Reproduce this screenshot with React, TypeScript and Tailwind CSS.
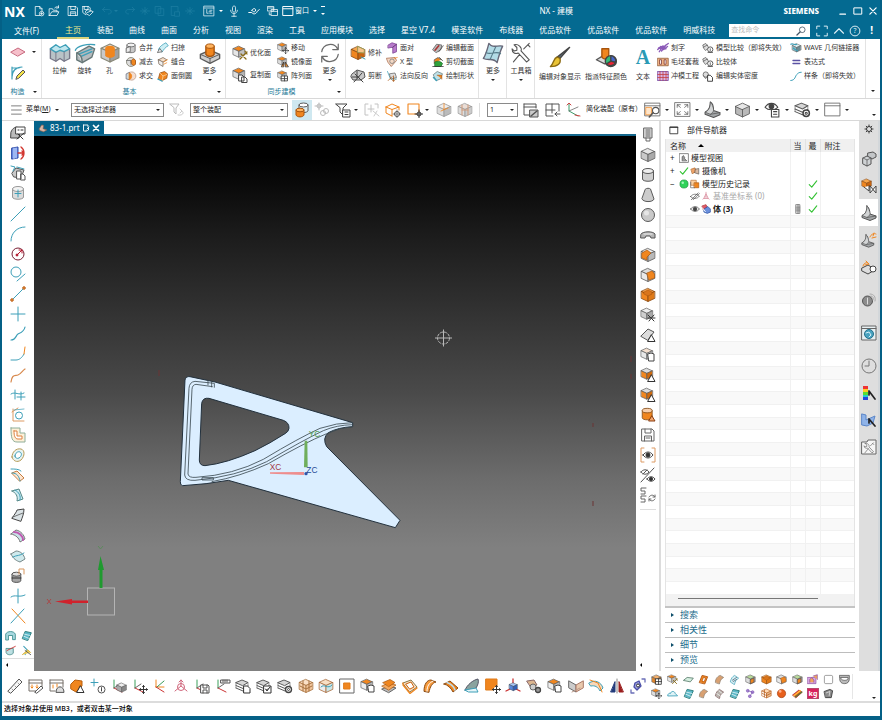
import React from "react";
import type { ReactNode } from "react";

const G = "#5a5a5a";
const L = "#d6d6d6";
const O = "#f0861f";
const T = "#3d9fb8";
const N = "none";

const p = (d: string, s: string = G, f: string = N, w: number = 1) => (
  <path d={d} stroke={s} fill={f} strokeWidth={w} strokeLinejoin="round" strokeLinecap="round" />
);
const c = (cx: number, cy: number, r: number, s: string = G, f: string = N, w: number = 1) => (
  <circle cx={cx} cy={cy} r={r} stroke={s} fill={f} strokeWidth={w} />
);
const box = (t: string, l: string, r: string, s: string = G) => (
  <>
    {p("M8 1.5 14.5 4.5 8 7.5 1.5 4.5Z", s, t, 0.8)}
    {p("M1.5 4.5 8 7.5V14.5L1.5 11.5Z", s, l, 0.8)}
    {p("M14.5 4.5 8 7.5V14.5L14.5 11.5Z", s, r, 0.8)}
  </>
);
const small = (n: ReactNode, x = 0, y = 0, k = 0.75) => <g transform={`translate(${x} ${y}) scale(${k})`}>{n}</g>;
const grayBox = box("#eee", "#cfcfcf", "#a9a9a9");
const orangeBox = box("#f9a64b", O, "#c96510", "#8a4a12");
const mixBox = box(O, "#ddd", "#b5b5b5");
const sheet = (f: string, s: string = G) => p("M2 11C3 6 5 4 8 2L14 6C11 8 9 10 8 15Z", s, f);
const layers = (
  <>
    {p("M1 10 8 13 13 10.500M1 7.500 8 10.500 13 8", G)}
    {p("M1 4.500 7 2 13 4.500 8 7.500Z", G, L)}
    {p("M1 4.500V10M13 4.500V8", G, N, 0.6)}
  </>
);
const page = p("M9 8H12.500L15 10.500V15H9Z", "#333", "#fff");
const tri = p("M11.500 8 15 14.500H8Z", "#333", "#fff");
const gearlet = <>{c(11.500, 11.500, 3, "#444", "#fff", 1.4)}{c(11.500, 11.500, 1, "#444")}</>;
const crossMove = p("M11.500 7.500V15.500M7.500 11.500H15.500M10.500 8.500 11.500 7.500 12.500 8.500M10.500 14.500 11.500 15.500 12.500 14.500M8.500 10.500 7.500 11.500 8.500 12.500M14.500 10.500 15.500 11.500 14.500 12.500", "#333");
const axes = <>{p("M3 2V10", "#3aa05a")}{p("M3 10 11 14", "#c33")}{p("M3 10 9 6", "#666")}</>;
const cyl = (t: string, b: string, s: string = G) => (
  <>
    {p("M2.500 4V12C2.500 15 13.500 15 13.500 12V4", s, b)}
    <ellipse cx="8" cy="4" rx="5.500" ry="2.500" fill={t} stroke={s} />
  </>
);
const wrench = p("M3 2 5 4 5 6 3 6.500 1.500 5C1.500 8 4 9 6 8L12 14.500 14 13 8 6.500C9 4 6 1 3 2ZM14 1 10 5M7 9 2.500 14.500M13 2 14.500 3.500", "#555", N, 0.8);
const cad = <>{p("M6 1C8 2 9 6 9 9L15 11V13L9 15.500 1 12.500V10.500C5 9 6 5 6 1Z", "#555", "#a3a6a8")}{p("M6 1C6 5 5 9 1 10.500L6 12.500C8 11 9 10 9 9M6 12.500 15 11", "#555", "#d3d5d6", 0.7)}</>;

const icons: Record<string, ReactNode> = {
  newDoc: <>{p("M9 14H3V2H9L12 5V8M9 2V5H12", "#fff")}{c(11.500, 11.500, 3, "#fff")}{p("M11.500 10V13M10 11.500H13", "#fff")}</>,
  open: <>{p("M1.500 14V5H6L7 7H12V9M1.500 14H12L14.500 9H5L2 14M9 4C10 2 12 2 14 3M14 1V4H11", "#fff")}</>,
  save: <>{p("M2 2H12L14 4V14H2ZM5 2V6H11V2M4.500 14V9H11.500V14M6 11H10", "#fff")}</>,
  saveEdit: <>{p("M1 2H9L11 4V6M1 2V10L5 13M3 2V6H8V2M5 8 8 6 15 9 10 14 6 12Z M7 10 12 8", "#fff")}</>,
  undo: p("M2 6H10C15 6 15 12 10 12M5 3 2 6 5 9", "#1c7ea2"),
  redo: p("M14 6H6C1 6 1 12 6 12M11 3 14 6 11 9", "#1c7ea2"),
  dimA: p("M2 8H14M8 3V13M4 5 11 11M4 11 11 5", "#1c7ea2"),
  dimB: p("M2 2H9V11H2ZM6 5H13V14H6Z", "#1c7ea2"),
  dimC: p("M3 2H12V8M3 2V14H7M8 9H14V15H8Z", "#1c7ea2"),
  cmd: p("M1.500 1.500H14.500V14.500H1.500ZM1.500 4H14.500M5 6V11H7M9 7H12M9 11H12M8 9H11", "#e8f4f8"),
  mic: p("M6 3C6 .8 10 .8 10 3V8C10 10 6 10 6 8ZM3.500 7C3.500 13 12.500 13 12.500 7M8 12V15M5 15H11", "#fff"),
  touch: p("M1 10H5C7 13 11 12 12 9L15 6M5 7C8 3 11 5 10 8C9 10 6 9 5 7", "#fff", N, 1.3),
  windows: p("M1 2H9V8H1ZM1 4H9M6 6H14V14H6ZM6 8.500H14M3 10V13H5", "#fff"),
  window: p("M1.500 2H14.500V14H1.500ZM1.500 5H14.500", "#fff", N, 1.3),
  full: p("M1 5V1.500H5M11 1.500H15V5M15 11V14.500H11M5 14.500H1V11", "#dff0f6", N, 1.3),
  up: p("M2 11 8 5 14 11", "#dff0f6", N, 1.5),
  help: <>{c(8, 8, 6.500, "#dff0f6", N, 1.3)}<text x="8" y="11" fontSize="9" textAnchor="middle" fill="#dff0f6">?</text></>,
  search: <>{c(10, 6, 4.500, "#456", N, 1.3)}{p("M6.500 9.500 1.500 14.500", "#456", N, 2)}</>,
  min: p("M3 13H12", "#fff", N, 1.8),
  max: p("M2 3H14V13H2Z", "#fff", N, 1.6),
  close: p("M3 3 13 13M13 3 3 13", "#fff", N, 2),
  tabClose: p("M3 3 13 13M13 3 3 13", "#fff", N, 3.5),
  plane: p("M1 8 8 4 15 8 8 12Z", "#c7687e", "#f6bfca"),
  sketch: <>{p("M2 2V14M2 3H9M2 12C2 6 6 2 12 2", T, N, 1.2)}{p("M6 14 7 11 13 5 15 7 9 13Z", "#555", "#f3e24a")}</>,
  extrude: <>{p("M1 5 5 3 8 5 11 3 15 5V12L11 14 8 12 5 14 1 12Z", "#778", "#b9c3c7")}{p("M1 5 5 2 8 4 12 2 15 5 11 7 8 6 5 7.500Z", T, "#bfe6ee")}{p("M5 7.500V14M11 7V14", "#778", N, 0.7)}</>,
  revolve: <>{p("M2 8 11 3 15 5 13 11 6 15 2 13Z", "#677", "#b5babd")}{p("M1 6C2 3 10 1 15 2M3 9 13 5M4 11 13 7", T)}{p("M2 8C5 9 6 11 6 15", "#677", "#ddd")}</>,
  hole: <>{box("#eadbd0", "#c9c9c9", "#9f9f9f", "#887")}<ellipse cx="8" cy="4.800" rx="3.500" ry="2" fill={O} />{p("M4.500 5V10C6 12 10 12 11.500 10V5", N, O)}</>,
  unite: <>{cyl("#f2f2f2", "#c9c9c9")}{p("M2 8 7 6V13L2 14Z", G, "#eee")}</>,
  subtract: <>{c(8, 8, 6, "#776", "#ddd")}{p("M8 8C8 4 12 3 14 6V11C12 14 8 12 8 8", "#a5510d", O)}{p("M2 6H8V12", "#666")}</>,
  intersect: <>{c(9, 8, 5.500, "#b98", "#f4ddcf")}{p("M2 5 6 3V13L2 12Z", "#667", "#ccd8dd")}{p("M6 4C10 5 10 11 6 13Z", O, O)}</>,
  sweep: <>{p("M2 10C3 6 8 3 12 1L15 5C11 7 9 10 7 13Z", T, "#cdeef4")}{p("M1 14 7 13 4 9Z", "#555", "#eee")}</>,
  sew: <>{p("M2 5 8 2 13 5 8 8Z", "#765", "#f6dfca")}{p("M2 5 8 8V14L3 11Z", "#765", "#eee")}{p("M9 8 14 5M9 11 13 9", O)}</>,
  faceBlend: <>{p("M2 11 4 4 10 2 14 5 13 11 7 14Z", "#974e10", O)}{p("M4 4 8 8 13 6M8 8 7 14", "#fbd2a0")}{p("M1 12 7 15", T, N, 1.5)}</>,
  moreBoss: <>{p("M1 9 8 6 15 9V12L8 15.500 1 12Z", G, "#cfcfcf")}{p("M1 9 8 12 15 9M8 12V15", G, N, 0.7)}{p("M5 3V9C6 11 10 11 11 9V3", "#a8540c", O)}<ellipse cx="8" cy="3" rx="3" ry="1.600" fill="#ffb35e" stroke="#a8540c" strokeWidth=".7" /></>,
  optFace: <>{small(box(O, "#e6e6e6", "#c2c2c2"), 0, 0, 0.85)}{p("M8 14 15 7M9 9 14 14M13 6 15 9", "#8a6d1c", N, 1.3)}</>,
  copyFace: <>{small(mixBox, 0, 0, 0.85)}{p("M7 8H10L12 10V14H7ZM10 10H13L15 12V15.500H10Z", "#444", "#fff")}</>,
  moveFace: <>{small(mixBox, 0, 0, 0.85)}{crossMove}</>,
  mirrorFace: <>{small(mixBox, 0, 0, 0.85)}{p("M6 14 9 8V14ZM15 14 11 8V14Z", "#333", O)}</>,
  patternFace: <>{small(mixBox, 0, 0, 0.85)}{p("M6 8H14V14.500H6ZM6 11.500H14M10 8V14.500", "#444", "#fff", 1.2)}</>,
  cycle: p("M2 7C3 1 11 0 13.500 5M14 1.500V5.500H10M14 9C13 15 5 16 2.500 11M2 14.500V10.500H6", "#6b6b6b", N, 0.9),
  patch: <>{orangeBox}{p("M8 1.500 14.500 4.500 14 8 8 7.500Z", "#995", "#f7c48b")}{p("M11 12 15 14", T)}</>,
  snip: <>{p("M2 6 7 2 14 4 15 9 11 12 3 12 1 9Z", "#555", "#c9c9c9")}{p("M4 14 12 5M5 6 13 14M2 9H9M7 3V10", "#444")}</>,
  facePair: <>{p("M3 4 8 1 14 3V13L9 15V7L3 8Z", "#7a3f91", "#b77acb")}{p("M9 7 14 3", "#4b275a")}</>,
  xType: <>{p("M1 3 12 2 14 6 7 14 3 9Z", "#a86a4a", "#f5d9c5")}{c(8, 7, 3, "#777")}{p("M11 3 15 2", O)}</>,
  reverse: <>{p("M2 2 6 12H14", T)}{p("M5 5 12 4 14 10 7 12Z", "#666", "#ddd")}{p("M3 14 8 9M10 15V8M8 13 10 15 12 13", "#a5510d")}</>,
  editSec: <>{p("M1 10 6 3 13 4 12 10 6 14Z", G, "#bbb")}{p("M4 11 9 5", "#a33", N, 2)}{p("M9 13 15 5", "#444", O)}</>,
  cutSec: <>{p("M3 10V5L8 2 12 5", "#555", O)}{p("M4 8C6 6 12 7 14 10L12 14H4Z", "#176d24", "#2fa23c")}{p("M1 14 15 14M10 2 14 6", "#333")}</>,
  drawShape: <>{p("M2 6 7 2 14 5 11 12 6 14Z", "#677", "#bde2ea")}{p("M7 7H13V12", "#b25511", O)}{p("M2 10 6 14", T, N, 2)}</>,
  surface: <>{p("M1 12C3 9 4 5 5 1C8 5 11 2 15 3C13 7 12 11 11 15C8 11 5 14 1 12Z", "#667", "#b3dbe6")}{p("M3 7.500C6 10 10 6 13.500 8.500M10 3.500C8 8 7 10 6 12.500", "#557a88", N, 0.8)}</>,
  tools: wrench,
  brush: <>{p("M15 1 8 9 6 8Z", "#444", "#5c6a74")}{p("M8 9 6 8C3 9 4 12 1 15C6 15 9 13 8 9Z", "#8b6a12", "#e9c335")}</>,
  assign: <>{p("M1 10 6 7 12 9 7 13Z", G, "#ddd")}{p("M5 2H10V8C9 10 6 10 5 8Z", "#a8540c", O)}{c(11.500, 11, 4, "#444", "#3b7")}{p("M11.500 11V7A4 4 0 0 1 15 12Z", "#444", "#46c")}{p("M11.500 11 15 12A4 4 0 0 1 8.500 13Z", "#444", "#e23")}</>,
  engrave: <>{p("M1 10 5 6 8 7 15 2M3 13 8 5M6 12 12 4M9 10 14 6M2 8 12 9", "#8c5ab8", N, 1.8)}</>,
  blank: <>{p("M1 3H15V13H1Z", "#8d5530", "#f0b485")}{p("M4 5H6V11H4ZM10 5H12V11H10Z", "#733", "#fff")}</>,
  die: <>{p("M1 2H15V14H1Z", "#6b3fa0", "#d7b4e6")}{p("M4 2V14M8 2V14M12 2V14M1 6H15M1 10H15", "#c33a3a")}</>,
  compare: <>{p("M2 7 7 4 9 8 5 11ZM2 7 1 4 5 2 7 4", G, "#ddd")}{c(11, 10, 3.500, G, "#fff", 1.3)}{p("M8 14H14M11 9V12", "#444")}</>,
  density: <>{p("M2 7 7 4 9 8 5 11Z", G, "#ccc")}{c(5, 6, 3.500, G, "#ddd")}{p("M8 7H11L14 10V15H8Z", "#333", "#fff", 1.2)}</>,
  wave: <>{small(box("#dff0f3", "#8fb7bf", "#6d8b92"), 2, 1, 0.85)}{p("M1 3C4 1 6 5 9 3M4 8 10 12", T, N, 1.5)}</>,
  equals: p("M4 6H13M4 10H13", "#5b52a3", N, 1.8),
  spline: p("M1 14C7 14 7 8 9 6S12 3 15 3", T, N, 1.3),
  menu: p("M2 2.500H15M2 8H15M2 13.500H15", "#555"),
  filter: <>{p("M1 2H10L7 6V12L5 10V6Z", "#bbb")}{p("M9 13C13 14 16 11 13 9M11 7 13 9 11 11", "#ccc")}</>,
  selCube: <>{p("M5 3V9C6 11 13 11 14 9V3", G, "#dceef3")}<ellipse cx="9.500" cy="3" rx="4.500" ry="2" fill="#fff" stroke={G} />{p("M2 8V13C3 15.500 9 15.500 10 13V8", "#a8540c", O)}<ellipse cx="6" cy="8" rx="4" ry="1.800" fill="#ffb35e" stroke="#a8540c" /></>,
  dimSel: <>{c(5, 4, 2, "#bbb")}{p("M5 1V8M1 4H9", "#bbb")}{c(9, 11, 2.500, "#bbb")}{c(12, 9, 2.500, "#bbb")}</>,
  filterList: <>{p("M1 2H12L8 6V13L5 10V6Z", "#444")}{p("M8 8H15V15H8ZM10 10H13M10 12.500H13", "#444", "#fff")}</>,
  dimBr: <>{p("M4 2H1V13H4M11 2H14V6M7 3V10M4 7H10", "#c2c2c2")}{p("M9 9 15 14M13 9 10 14", "#ccc")}</>,
  orBox: <>{p("M1 5 7 2 14 5V8M1 5V11L7 14M1 5 7 7.500 14 5M7 7.500V14", O)}{c(12, 12, 2.500, "#555", "#fff")}{p("M12 8V16M8 12H16", "#555", N, 0.7)}</>,
  orRect: <>{p("M1 2H12V12H1Z", O, "#fff", 1.1)}{c(12, 12, 2, "#333", "#fff")}{p("M12 8V16M8 12H16", "#333")}</>,
  grayCube: <>{box("#eee", "#ddd", "#bbb", "#999")}{p("M8 1.500V7.500M5 9 12 6", O, N, 0.8)}</>,
  sliceCube: <>{box("#e9ddd6", "#ddd", "#ccc", "#999")}{p("M5 3V13M11 3V13M5 8H11", "#cf9a7a")}</>,
  layerTable: <>{p("M1 2H13V6M1 2V13H7M1 5H13", "#555")}{p("M7 8H15V15H7Z", "#555", "#ccc")}{p("M8 14 14 9", "#555", N, 1.5)}</>,
  grid: p("M8 14H1V2H14V9M1 8H10M7 2V11M10 12H15M12 10 10 12 12 14", "#555"),
  csys: <>{p("M3 2V9L12 14", "#3a9a68")}{p("M3 9 12 5", "#555", N, 0.7)}{p("M9 13 14 14M1 3 3 1 5 3", "#c44")}</>,
  viewFind: <>{p("M1 2H15V14H1ZM1 4.500H15", "#666", N, 0.8)}{p("M2 6H7V13H2Z", O, "#ffe6cb", 0.7)}{c(11, 9, 3, "#555", "#fff")}{p("M8.500 11 5 15", "#555", N, 1.5)}</>,
  fit: p("M1 1.500H15V14.500H1ZM3 6V3.500H6M10 3.500H13V6M13 10V12.500H10M6 12.500H3V10M3 3.500 6 6M13 3.500 10 6M3 12.500 6 10M13 12.500 10 10", "#555", N, 0.7),
  render: cad,
  grayCyl: <>{p("M1.500 5V12L8 15 14.500 12V5", G, "#b9b9b9", 0.8)}{p("M1.500 5 8 2 14.500 5 8 8ZM8 8V15", G, "#e6e6e6", 0.8)}</>,
  eyeList: <>{p("M1 6C4 1 10 1 13 6C10 9 4 9 1 6Z", "#444")}{c(7, 5, 2.200, "#444", "#444")}{p("M7 8H14V15H7ZM9 10H12M9 12.500H12", "#444", "#fff")}</>,
  layGear: <>{layers}{gearlet}</>,
  winBox: p("M1 2H15V14H1ZM1 4.500H15", "#666", N, 0.8),
  measureBody: <>{p("M1 7C3 1 9 1 10 5L9 13 1 13Z", "#444", "#bbb")}{p("M6 2H15V9H6Z", "#444", "#fff")}{p("M8 5H9M11 5H13M7 14 14 8M8 9 13 14", "#333")}</>,
  blueCyl: <>{p("M2 3 8 2V13L2 14Z", "#2a48a8", "#6d8ee4")}{p("M4 3V14M6 3V13", "#cfe0ff")}{p("M11 2C15 5 15 11 11 14M8 8H14M12 6 14 8 12 10", "#d2362f", N, 1.3)}</>,
  blueCopy: <>{p("M2 8 6 3 14 5 11 13 4 12Z", "#555", "#c9c9c9")}{p("M1 1 5 2 3 6M7 2 14 4", T)}{p("M7 6H11V14H7ZM11 9H13L15 11V15H11Z", "#555", "#fff")}</>,
  cylPlus: <>{cyl("#f3f3f3", "#dcdcdc", "#999")}{p("M8 5V12M5 8.500H11", T)}</>,
  line: p("M1 15 15 1", T),
  arc: p("M1 15C1 7 7 1 15 1", T),
  circle: <>{c(8, 8, 6, "#7a2035")}{p("M7 9 12 4M9 4H12V7", "#b5172d")}{c(7, 9, 1, "#b5172d", "#b5172d")}</>,
  tangent: <>{c(6, 6, 5, T)}{p("M7 15 15 8", T)}</>,
  seg: <>{p("M2 14 14 2", T)}{c(2, 14, 1.300, "#c0651c", "#e08a40")}{c(14, 2, 1.300, "#c0651c", "#e08a40")}</>,
  cross: p("M8 1V15M1 8H15", T),
  sCurve: p("M1 14C6 14 6 9 8 8S14 6 15 1", T, N, 1.2),
  jCurve: <>{p("M1 14H6C9 14 12 12 14 8", T)}{p("M14 8 15 1", O)}</>,
  orCurve: p("M1 15C2 7 5 9 8 8S12 4 15 2", "#d8894d", N, 1.2),
  hash: p("M1 7C5 4 9 9 14 6M7 10H15M5 3V12M11 5V13", T),
  offCircle: <>{p("M3 2V14H14M2 5 8 1", "#dd9a62")}{c(9, 8.500, 3.500, T)}{p("M4 3 14 2", T, N, 0.7)}</>,
  pocket: <>{p("M1 1H10V6H15V15H7C2 15 1 11 1 1Z", "#8fae9a", "#fdf0d8")}{p("M4 4H7V9H12V12H8C5 12 4 9 4 4Z", "#dd8040", "#fff")}</>,
  ring: <>{p("M2 10C2 5 6 1 11 2C15 3 15 9 11 13C7 16 3 14 2 10Z", "#b79c58", "#e9f3f0")}{p("M5 9C5 6 8 4 10 5C12 6 12 9 9 11C7 12 5 11 5 9Z", T, "#fff")}</>,
  ribbonO: <>{p("M2 6 7 4 14 11 10 14Z", "#c77b3c", "#fde7d3")}{p("M2 6C7 6 9 9 10 14M1 2C5 2 9 2 11 4", T)}</>,
  tube: <>{p("M2 4 9 2 13 12 7 14C8 9 6 6 2 4Z", "#588", "#cdeaf0")}{p("M5 3C9 5 11 9 10 13", T)}</>,
  sheetGray: <>{p("M2 11C5 7 7 4 7 3L14 2C14 7 12 11 11 14Z", "#444", "#dbe3e6")}{p("M3 10 13 6", "#444", N, 0.7)}</>,
  sheetPurple: <>{p("M1 6 6 2C11 3 14 7 15 11L10 14C9 10 6 7 1 6Z", "#777", "#c8e2e8")}{p("M4 4C9 4 13 8 13 12", "#c05ab0", N, 2)}</>,
  sheetTeal: <>{p("M1 6 6 3C11 3 14 7 15 11L10 14C7 13 3 11 1 6Z", "#788", "#cfe9ec")}{p("M3 9C6 7 11 8 14 5", T)}</>,
  grayDrum: <>{small(cyl("#ddd", "#a5a5a5", "#333"), 0, 3, 0.8)}{p("M9 6V1H14V6", "#d8975e")}{p("M2 10H11", "#333")}</>,
  crossCurve: p("M8 1V15M1 9C5 6 9 10 15 7", T),
  xCross: <>{p("M2 1 15 15", O)}{p("M14 1 1 15", T)}</>,
  arch: <>{p("M1 14V6C3 1 13 1 15 6V14H11V8H5V14Z", "#388", "#a8d8e0", 1.2)}</>,
  tealSheet: <>{p("M2 12 6 2 15 4 10 15Z", "#277", "#5bb8c8", 1.3)}{p("M5 6 13 8M4 9 11 12", "#fff")}</>,
  drumPink: <>{p("M2 5H12V12C9 15 4 15 2 12Z", "#488", "#bde0e3", 1.2)}{p("M3 8 15 2", "#c33", N, 1.3)}</>,
  knife: <>{p("M4 2 9 7 6 14", T, N, 1.5)}{p("M2 14 10 7 14 11", "#c79a1d", "#f1cf57")}{p("M6 8 14 14", "#555", N, 1.3)}</>,
  screw: <>{p("M4 1H12V11H4Z", "#666", "#ddd")}{p("M6 3H10M6 5H10M6 7H10M6 9H10M6 11V14H10V11", "#666")}</>,
  block: box("#e6e6e6", "#c9c9c9", "#aaa"),
  cylinder: cyl("#eee", "#cfcfcf"),
  cone: p("M5.500 2C6.500 1 9.500 1 10.500 2L14 12C13 15.500 3 15.500 2 12Z", G, "#ccc"),
  sphere: <>{c(8, 8, 6.500, G, "#c9c9c9")}{c(6.500, 6, 2.500, N, "#e6e6e6")}</>,
  bolt: <>{p("M1 7C3 4 13 4 15 7V11H11L10 9H6L5 11H1Z", "#555", "#b5b5b5")}{p("M4 7H12", "#eee")}</>,
  edgeL: <>{box("#eee", "#ddd", "#b9b9b9")}{p("M2 6 7 3 11 6 7 10V13L2 11Z", "#a8540c", O, 0.7)}</>,
  edgeR: <>{box("#ddd", "#e9e9e9", "#ccc")}{p("M7 6 12 4 14.500 7V11L9 13Z", "#a8540c", O, 0.7)}</>,
  shell: <>{box("#fba44b", O, "#e07a18", "#8a4a12")}{p("M4 5 8 3 12 5V7L8 9 4 7Z", "#a8540c", "#d9751c", 0.6)}</>,
  boxTool: <>{small(grayBox, 0, 0, 0.85)}{p("M8 8 14 14M14 8 9 14M8 11H15", "#333")}</>,
  sheetTri: <>{p("M1 9 8 2 14 5 8 13Z", "#555", "#dcdcdc")}{tri}</>,
  boxCopy: <>{small(box("#f5e0cf", "#e8e8e8", "#ccc"), 0, 0, 0.85)}{p("M8 7 11 6 14 7V14H9Z", "#444", "#fff")}</>,
  orTri: <>{small(box("#ddd", O, "#d06a0d"), 0, 0, 0.85)}{tri}</>,
  drumTri: <>{small(cyl("#f7cfae", O, "#8a5520"), 0, 0, 0.9)}{p("M12 9 15 14H9Z", "#8a3d10", "#f2a871")}</>,
  saveGray: <>{p("M2 2H12L14 4V14H2ZM5 2V6H11V2M4.500 14V9H11.500V14M6 11H10", "#666")}</>,
  eyeBr: <>{p("M4 1H1V15H4M12 1H15V15H12", "#dd9a62")}{p("M3 8C6 4 10 4 13 8C10 12 6 12 3 8Z", "#444")}{c(8, 8, 2, "#333", "#333")}</>,
  eyeSlash: <>{p("M1 5C3 2 7 2 9 5C7 8 3 8 1 5ZM1 15 14 1M3 7 7 3", "#555")}{p("M7 12C9 9 13 9 15 12C13 15 9 15 7 12Z", "#444")}{c(11, 12, 1.500, "#333", "#333")}</>,
  ssCycle: p("M6 1H1V4H5V7H1M6 9H1V12H5V15H1M9 10C11 7 14 8 15 10M15 8V10H13M15 12C13 15 10 14 9 12M9 14V12H11", "#666"),
  ruler: <>{p("M1 13 12 1 15 4 4 15Z", "#555", "#f7f7f7")}{p("M5 11 6 12M8 8 9 9M11 5 12 6", "#777", N, 0.7)}</>,
  dimTable: <>{p("M1 2H14V9M1 2V13H8M1 5H14", "#77706a")}{p("M4 7V10M3 9 4 10 5 9M9 7V10M8 9 9 10 10 9", O)}{p("M7 14 13 8 15 10 9 15Z", "#555", "#fff")}</>,
  dimArc: <>{p("M1 2H14V9M1 2V13H6M1 5H14", "#77706a")}{p("M4 7V10M8 6V9", O)}{p("M7 14C7 7 15 7 15 14Z", "#555", "#ddd")}</>,
  orGem: <>{p("M2 6 6 2 13 3 13 8 7 14 2 11Z", "#b85f0d", O)}{tri}</>,
  plusInfo: <>{p("M4 1V8M1 4.500H8", T)}{c(11.500, 11.500, 3.500, "#555")}{p("M11.500 10.500V13M11.500 9.200V9.400", "#444")}</>,
  axBox: <>{axes}{small(box("#eee", "#aaa", "#888"), 5, 4, 0.7)}</>,
  axMove: <>{axes}{crossMove}</>,
  axOr: <>{p("M4 2V9M4 9H12", O)}{p("M5 9 12 3", "#3a9a58")}{p("M4 9 12 14", "#c33")}</>,
  axPink: <>{p("M8 2V8L2 13M8 8 14 13M6 4 8 2 10 4", "#d0667c")}{c(8, 9, 3.500, "#d0667c")}</>,
  axSave: <>{axes}{p("M7 7H14L15 8V15H7ZM9 7V10H13V7M9 15V12H13V15", "#555", "#fff")}</>,
  axRuler: <>{axes}{p("M6 2H15V5H6ZM8 2V4M10 2V4M12 2V4", "#555", "#fff")}</>,
  layPage: <>{layers}{page}</>,
  layCheck: <>{layers}{p("M8 8H15V15H8ZM9.500 11 11 13 14 9", "#333", "#fff")}</>,
  orWire: <>{box("#fbe0c6", "#f6d2b0", "#f0c39a", "#a7713e")}{p("M5 3 5 13M11 3V13M2 8 8 11 14 8", "#a7713e")}</>,
  sectBox: <>{box("#f8dfc4", "#eee", "#cde5e5", "#a86a3a")}{p("M3 9C6 5 10 12 14 7", T)}</>,
  frame: <>{p("M1 1H15V15H1Z", "#666", "#fff")}{p("M5 5H11V11H5Z", "#e07a18", O)}</>,
  orBoxCopy: <>{small(box(O, "#eee", "#bbb"), 0, 0, 0.85)}{p("M8 8 11 7 14 8V14H9Z", "#444", "#fff")}</>,
  orStack: <>{p("M1 11 8 8 15 10 8 14.500Z", "#666", "#bbb")}{p("M1 8 7 5 15 7 8 12Z", "#a8540c", "#f6a85c", 0.7)}{p("M2 4.500 9 1.500 14 4.500 8 8.500Z", "#a8540c", O, 0.7)}</>,
  orFrame: <>{p("M1 5 9 2 15 9 8 14Z", "#874", "#fbe0c8")}{p("M4 6 9 4 12 9 8 11Z", "#c96510", "#fff")}{p("M1 5V7L8 15.500 15 10", O, N, 1.3)}</>,
  orSheet: <>{p("M2 13C2 6 5 2 9 2L14 4C10 5 8 9 7 14Z", "#8a4a12", "#f79b3d")}{p("M5 13C5 8 7 5 11 3", "#fff")}</>,
  orSheet2: <>{p("M1 6 7 3 15 10 10 14C8 10 5 7 1 6Z", "#8a4a12", O)}{p("M4 4.500C8 6 11 9 12 12", "#bde", N, 1.5)}</>,
  fan: <>{p("M1 12C3 7 9 2 14 1C15 4 14 7 12 10Z", "#556", "#8aa39f")}{p("M1 12 12 10 14 14 5 14Z", T, "#e6f5f8")}</>,
  orMove: <>{p("M1 1H12V12H1Z", "#e07a18", O)}{c(12, 12, 3.500, N, "#fff")}{crossMove}</>,
  blueAx: <>{p("M8 1V5M1 13 5 11M15 13 11 11", "#c33", N, 1.3)}{small(box("#a9c6f6", "#5a86dc", "#3560b8", "#345"), 3.500, 4, 0.6)}</>,
  gears: <>{p("M1 3 8 2 11 7 5 9Z", "#866", "#dcb68f")}{c(7, 9, 3, "#666", "#ccc")}{c(12, 12, 2.500, "#444", "#999", 1.3)}</>,
  mirrorSheet: <>{p("M1 3 8 7V14L1 10Z", "#666", "#ccc")}{p("M15 3 8 7V14L15 10Z", "#a76", "#e9c9ae")}{p("M4 14 12 10", "#b98")}</>,
  arcBand: <>{p("M1 5C7 1 13 4 15 10L12 13C10 9 7 7 3 8Z", T, "#f8d8ba")}{p("M2 2 10 5 14 14", O)}</>,
  mirrorTri: <>{p("M6 4V14H2Z", "#223a7a", "#223a7a")}{p("M10 4V14H14Z", "#9a1f1f", "#9a1f1f")}{p("M8 1V15", "#555", N, 0.7)}</>,
  chain: <>{p("M5 5 9 3 11 8 7 12 4 9Z", "#4b4fa8", "#9fa3df", 1.3)}{p("M1 12V15H4M12 1H15V4", "#6b6fb8", N, 1.3)}{c(8, 7.500, 1.500, "#333", "#fff")}</>,
  gear: <>{c(8, 8, 4, "#333", N, 1.5)}{p("M8 1.500V4M8 12V14.500M1.500 8H4M12 8H14.500M3.500 3.500 5 5M11 11 12.500 12.500M12.500 3.500 11 5M5 11 3.500 12.500", "#333", N, 1.5)}</>,
  asm: <>{p("M7 2 12 1 15 3V6L11 8 7 6Z", "#555", "#c3c6c8")}{p("M2 7 6 5 10 7V13L6 15 2 13Z", "#555", "#cfd2d4")}{p("M2 7 6 9 10 7M6 9V15", "#555", N, 0.7)}</>,
  constr: <>{small(orangeBox, 0, 0, 0.7)}{p("M3 9 8 13V8M9 8V15L15 8V15L9 8", "#444", "#fff")}</>,
  partNav: cad,
  reuse: <>{small(cad, 0, 2, 0.85)}{p("M9 5C10 2 13 1 15 2M11 6 15 5M13 1 12 4", O)}</>,
  hd3d: <>{p("M1 9 7 6 12 9V12L7 15 1 12Z", "#444", "#ddd")}{p("M2 7C3 3 7 3 8 5M5 2 8 5 4 6", O)}{c(12, 10, 3, "#444", "#fff")}</>,
  touchBall: <>{c(6.500, 9, 5, "#555", "#8c8c8c")}{p("M6.500 6V12", "#ddd")}{p("M9 2C13 2 15 5 14 9M10 4C12 4 13 6 12 8", "#aaa")}</>,
  web: <>{p("M1 1H15V15H1ZM1 3.500H15", "#666", "#e8f0f2")}{c(8, 9, 4.500, "#24708c", "#4aa3c0")}{p("M5 8 8 7 10 10 8 12", "#d5f1f7")}</>,
  clock: <>{c(8, 8, 7, "#777")}{p("M8 3V8H4", "#777")}</>,
  rainbow: <><rect x="2" y="1" width="5" height="3" fill="#e33" /><rect x="2" y="4" width="5" height="3" fill="#fc2" /><rect x="2" y="7" width="5" height="3" fill="#5d3" /><rect x="2" y="10" width="5" height="2" fill="#2cc" /><rect x="2" y="12" width="5" height="3" fill="#24d" />{p("M8 6 14 14M8 6V10", "#222", N, 1.7)}</>,
  bluePart: <>{p("M1 2 5 3V8L14 4 12 11 6 14 1 13Z", "#5b86c8", "#8fb3e8")}{p("M8 7 14 14M8 7V11", "#222", N, 1.7)}</>,
  toolBoxed: <>{p("M1 3H6L7 1H15V15H1Z", "#666", "#f6f6f6")}{small(wrench, 2, 3, 0.75)}</>,
  orGrid: <>{box("#f4b06c", "#e0862c", "#b8650f")}{p("M7 7H15V15H7ZM11 7V15M7 11H15", "#333", "#fff", 1.2)}</>,
  greenBox: <>{box("#b7d99a", "#ddd", "#a99")}{p("M8 8 13 6V12L8 14Z", "#555", O)}</>,
  purpleGrp: <>{p("M1 5H13V14H1Z", "#8a4aa0", "#d9a8e2")}{p("M4 12V8L7 5 10 9V12M9 3 15 1V8", "#8a4aa0", "#f1a75c")}</>,
  roundSq: <rect x="2" y="2" width="12" height="12" rx="2" fill="#fff" stroke="#777" />,
  bowl: <>{p("M1 2H15V7C15 12 12 14 8 14S1 12 1 7Z", "#444", "#bbb")}{p("M3 5H13V7C12 10 4 10 3 7Z", "#444", "#fff")}</>,
  slab: p("M1 9 6 5 15 6 11 11Z", "#557a68", "#d5efe0", 1.2),
  cloud: p("M1 11C1 8 4 7 5 8C6 4 11 4 12 8L15 11Z", T, "#dff3f7", 1.3),
  orDoor: <>{p("M2 12 6 2 14 4 10 14Z", "#b25511", O, 1.3)}{p("M6 10 8 5 11 6 9 11Z", "#b25511", "#fff")}</>,
  tanSheet: p("M2 12C2 6 6 3 9 2L14 5C10 7 9 10 8 14Z", "#987", "#d8a071", 1.2),
  tealOpen: <>{sheet("#d5f0f5", T)}{p("M5 9 11 5M6 11 11 8", "#456")}</>,
  graySheet: <>{sheet("#b8b2ac", "#755")}{p("M4 8 10 12M7 4 12 8", "#fff")}</>,
  purpleDots: <>{c(4, 4, 2, "#7a52b0", "#b79be0")}{c(11, 6, 2, "#7a52b0", "#b79be0")}{c(7, 12, 2, "#7a52b0", "#b79be0")}{p("M4 4 11 6 7 12", "#7a52b0")}</>,
  orBall: <>{c(8, 8, 6, "#a33f10", "#e8601c")}{c(6, 5, 2, N, "#ffb08a")}</>,
  bands: <>{p("M1 10 10 3 15 6 6 14Z", "#a22", "#e33")}{p("M3 11 12 4", "#fc3", N, 2)}{p("M5 13 14 6", "#393", N, 1.5)}</>,
  darkCup: <>{p("M2 5 10 2 14 4 12 14H4Z", "#333", "#8b8b8b", 1.2)}{p("M5 7 10 5 9 11", "#eee")}</>,
  orFacet: <>{box("#ffd9b3", "#fff", "#e9b78a", "#b25511")}{p("M2 8 8 11 14 8M5 3V13", "#b25511")}</>,
  tabPart: <>{p("M2 9 6 3 9 4 8 9 14 11 9 14 3 12Z", "#9a6248", "#d9b8a8")}</>,
  tabDoc: p("M3 2H12V6M3 2V14H8M10 10 14 6M8 14 13 12V8", "#fff", N, 1.8),
  viewIco: <>{p("M1 1H15V15H1Z", "#444", "#fff")}{p("M5 12V6L7 4 9 7V9L12 12Z", "#444", "#999")}</>,
  camera: <>{p("M2 5 8 3 10 9 4 12Z", "#a8540c", "#f0a268")}{p("M9 5 14 4V13L8 11Z", "#555", "#d9b9a2")}</>,
  hist: <>{p("M2 2H10V10H2Z", "#b36a2c", "#fbd0a0")}{p("M7 6H14V14H7Z", "#a8540c", O)}{p("M1 5V14H7", "#555")}</>,
  eyeOff: p("M1 9C4 4 11 4 15 8C12 13 4 13 1 9ZM2 14 13 3M5 14 15 4", "#444"),
  eye: <>{p("M1 8C4 3 12 3 15 8C12 13 4 13 1 8Z", "#333")}{c(8, 8, 3, "#333", "#444")}</>,
  datum: p("M8 2V9L3 13M8 9 13 13M5 12H11M8 5 5 10M8 5 11 10", "#d88a9b", N, 1.2),
  body: <>{p("M2 3 8 1 10 5 4 9Z", "#a22", "#e05a6a")}{p("M5 8 11 4 15 8V13L10 15 5 13Z", "#224a9a", "#6a8fdc")}{p("M2 6 7 12", "#fff", N, 1.5)}</>,
  ball: <>{c(8, 8, 6.500, "#168a35", "#2fd35a")}{c(6, 6, 2, N, "#a4f5ba")}</>,
  check: p("M2 9 6 13 14 3", "#35c235", N, 1.8),
  film: <>{p("M5 1H11V15H5Z", "#555", "#eee")}{p("M8 1V15M5 5H11M5 8H11M5 11H11", "#555")}</>,
  wnd: p("M2 3H14V14H2ZM2 4H14", "#333", N, 1.4),
};

function Icon({ n, s = "size-4" }: { n: string; s?: string }) {
  return (
    <svg viewBox="0 0 16 16" className={`${s} shrink-0`} aria-hidden="true">
      {icons[n]}
    </svg>
  );
}

function Caret({ cls = "border-t-[#222]" }: { cls?: string }) {
  return <span className={`inline-block shrink-0 border-x-2 border-t-2 border-x-transparent ${cls}`} />;
}

function IconButton({ n, s, cls = "" }: { n: string; s?: string; cls?: string }) {
  return (
    <button type="button" aria-label={n} className={`flex shrink-0 items-center justify-center ${cls}`}>
      <Icon n={n} s={s} />
    </button>
  );
}

function Big({ n, label, w = "w-[25px]", caret = false }: { n: string; label: string; w?: string; caret?: boolean }) {
  return (
    <button type="button" className={`flex ${w} shrink-0 flex-col items-center whitespace-nowrap pt-[3px] leading-[10px]`}>
      <Icon n={n} s="size-[22px]" />
      <span className="pt-0.5">{label}</span>
      {caret && <span className="flex h-2 items-center"><Caret /></span>}
    </button>
  );
}

function Tall({ n, label, w }: { n?: string; label: string; w: string }) {
  return (
    <button type="button" className={`flex ${w} shrink-0 flex-col items-center whitespace-nowrap pt-[7px] leading-[10px]`}>
      {n ? (
        <Icon n={n} s="size-[22px]" />
      ) : (
        <span aria-hidden="true" className="h-[22px] font-['Liberation_Serif',serif] text-[20px] leading-[22px] font-bold text-[#2a9ab5]">A</span>
      )}
      <span className="pt-1">{label}</span>
    </button>
  );
}

function Stack({ items, w }: { items: [string, string][]; w: string }) {
  return (
    <div className={`flex ${w} shrink-0 flex-col pt-0.5`}>
      {items.map(([n, label]) => (
        <button key={label} type="button" className="flex h-[14px] items-center gap-0.5 whitespace-nowrap">
          <Icon n={n} s="size-3" />
          {label}
        </button>
      ))}
    </div>
  );
}

function Pair({ items, w, cls = "pt-[3px]" }: { items: [string, string][]; w: string; cls?: string }) {
  return (
    <div className={`flex ${w} shrink-0 flex-col ${cls}`}>
      {items.map(([n, label]) => (
        <button key={label} type="button" className="flex h-[23px] items-center gap-0.5 whitespace-nowrap">
          <Icon n={n} />
          {label}
        </button>
      ))}
    </div>
  );
}

function Group({ label = "", w, caret = false, children }: { label?: string; w: string; caret?: boolean; children: ReactNode }) {
  return (
    <section className={`flex ${w} shrink-0 flex-col border-r border-[#e3e3e3]`}>
      <div className="flex h-[47px]">{children}</div>
      <div className="flex h-3 items-center text-[#1b7896]">
        <span className="flex-1 text-center">{label}</span>
        {caret && <span className="flex w-2 shrink-0"><Caret /></span>}
      </div>
    </section>
  );
}

function Picker({ value, label, w }: { value: string; label: string; w: string }) {
  return (
    <div className={`relative ${w} shrink-0`}>
      <select aria-label={label} className="block h-[14px] w-full appearance-none border border-[#8a8a8a] bg-white pl-0.5 text-[7px] leading-3 text-[#222]">
        <option>{value}</option>
      </select>
      <span className="pointer-events-none absolute top-0 right-1 flex h-full items-center"><Caret /></span>
    </div>
  );
}

const tabs = ["主页", "装配", "曲线", "曲面", "分析", "视图", "渲染", "工具", "应用模块", "选择", "星空 V7.4", "模圣软件", "布线器", "优品软件", "优品软件", "优品软件", "明威科技"];

const leftTools = ["measureBody", "blueCyl", "blueCopy", "cylPlus", "line", "arc", "circle", "tangent", "seg", "cross", "sCurve", "jCurve", "orCurve", "hash", "offCircle", "pocket", "ring", "ribbonO", "tube", "sheetGray", "sheetPurple", "sheetTeal", "grayDrum", "crossCurve", "xCross"];
const rightTools = ["screw", "block", "cylinder", "cone", "sphere", "bolt", "edgeL", "edgeR", "shell", "boxTool", "sheetTri", "boxCopy", "orTri", "orTri", "drumTri", "saveGray", "eyeBr", "eyeSlash", "ssCycle"];
const bottomTools = ["ruler", "dimTable", "dimArc", "orGem", "plusInfo", "axBox", "axMove", "axOr", "axPink", "axSave", "axRuler", "layPage", "layCheck", "layGear", "orWire", "sectBox", "frame", "orBoxCopy", "orStack", "orFrame", "orSheet", "orSheet2", "fan", "orMove", "blueAx", "gears", "orBoxCopy", "mirrorSheet", "arcBand", "mirrorTri", "chain"];
const smallTop = ["orGrid", "optFace", "slab", "orDoor", "tanSheet", "tealOpen", "greenBox", "shell", "edgeR", "greenBox", "purpleGrp", "roundSq", "bowl"];
const smallBottom = ["moveFace", "cloud", "tealSheet", "tanSheet", "graySheet", "tealSheet", "purpleDots", "orFacet", "orBall", "bands"];

function TitleBar() {
  return (
    <header className="flex h-[22px] shrink-0 items-center text-[8px] text-white">
      <div className="flex flex-[7] items-center">
        <span className="w-[29px] pl-0.5 text-[14px] font-bold">NX</span>
        <IconButton n="newDoc" s="size-3" cls="w-[15px]" />
        <IconButton n="open" s="size-3" cls="w-[15px]" />
        <IconButton n="save" s="size-3" cls="ml-1 w-[15px]" />
        <IconButton n="saveEdit" s="size-3" cls="w-[15px]" />
        <IconButton n="undo" s="size-3" cls="ml-1 w-[15px]" />
        <Caret cls="border-t-[#1c7ea2]" />
        <IconButton n="redo" s="size-3" cls="ml-1 w-[15px]" />
        <IconButton n="dimA" s="size-3" cls="w-[15px]" />
        <IconButton n="dimB" s="size-3" cls="w-[15px]" />
        <IconButton n="dimC" s="size-3" cls="w-[15px]" />
        <IconButton n="dimA" s="size-3" cls="w-[15px]" />
        <IconButton n="cmd" s="size-3" cls="ml-1 w-[15px]" />
        <span className="flex w-2.5 justify-center"><Caret cls="border-t-white" /></span>
        <IconButton n="mic" s="size-3" cls="w-4" />
        <IconButton n="touch" s="size-3" cls="ml-1 w-[15px]" />
        <IconButton n="windows" s="size-3" cls="ml-1 w-[15px]" />
        <IconButton n="window" s="size-3" cls="w-[15px]" />
        <button type="button" className="flex items-center gap-1 text-[7px]">窗口<Caret cls="border-t-white" /></button>
        <span className="ml-1 border-t border-white pt-px leading-none"><span className="block"><Caret cls="border-t-white" /></span></span>
      </div>
      <span>NX - 建模</span>
      <div className="flex flex-[4] items-center justify-end">
        <span className="mr-4 text-[8px] font-extrabold">SIEMENS</span>
        <IconButton n="min" s="size-2.5" cls="w-[15px]" />
        <IconButton n="max" s="size-2.5" cls="w-[15px]" />
        <IconButton n="close" s="size-2.5" cls="w-[15px]" />
      </div>
    </header>
  );
}

function TabBar() {
  return (
    <nav className="flex h-[17px] shrink-0 items-center text-[8px] text-white">
      <button type="button" className="mr-3 pr-1.5 pl-3">文件(F)</button>
      {tabs.map((t, i) => (
        <button
          key={i}
          type="button"
          className={i === 0 ? "h-full border-b-2 border-[#d8d27c] px-2 whitespace-nowrap text-[#f0e98c]" : "h-full border-b-2 border-transparent px-2 whitespace-nowrap"}
        >
          {t}
        </button>
      ))}
      <div className="ml-1.5 flex h-[13px] min-w-0 flex-1 items-center bg-white pr-1">
        <input aria-label="查找命令" placeholder="查找命令" className="w-full min-w-0 pl-0.5 text-[7px] outline-none placeholder:text-[#bbb]" />
        <Icon n="search" s="size-2.5" />
      </div>
      <div className="flex w-[70px] shrink-0 items-center justify-around pl-1">
        <IconButton n="full" s="size-3" />
        <IconButton n="up" s="size-3" />
        <IconButton n="help" s="size-3" />
        <button type="button" className="w-3 text-[10px] leading-[15px] font-bold">!</button>
      </div>
    </nav>
  );
}

function Ribbon() {
  return (
    <div className="flex h-[59px] shrink-0 bg-white text-[7px] text-[#333]">
      <Group label="构造" w="w-10" caret>
        <div className="flex w-full flex-col gap-1 pt-1 pl-2">
          <button type="button" aria-label="基准平面" className="flex h-[18px] items-center gap-1.5"><Icon n="plane" /><Caret /></button>
          <IconButton n="sketch" cls="w-4" />
        </div>
      </Group>
      <Group label="基本" w="w-[184px]" caret>
        <div className="flex pl-[5px]">
          <Big n="extrude" label="拉伸" />
          <Big n="revolve" label="旋转" />
          <Big n="hole" label="孔" />
          <div className="flex pl-[3px]">
            <Stack w="w-8" items={[["unite", "合并"], ["subtract", "减去"], ["intersect", "求交"]]} />
            <Stack w="w-10" items={[["sweep", "扫掠"], ["sew", "缝合"], ["faceBlend", "面倒圆"]]} />
          </div>
          <Big n="moreBoss" label="更多" caret />
        </div>
      </Group>
      <Group label="同步建模" w="w-[120px]" caret>
        <div className="flex pl-1.5">
          <Pair w="w-[45px]" items={[["optFace", "优化面"], ["copyFace", "复制面"]]} />
          <Stack w="w-10" items={[["moveFace", "移动"], ["mirrorFace", "镜像面"], ["patternFace", "阵列面"]]} />
          <Big n="cycle" label="更多" caret />
        </div>
      </Group>
      <Group w="w-[133px]">
        <div className="flex pl-1">
          <Pair w="w-9" cls="gap-0.5 pt-1" items={[["patch", "修补"], ["snip", "剪断"]]} />
          <Stack w="w-[46px]" items={[["facePair", "面对"], ["xType", "X 型"], ["reverse", "法向反向"]]} />
          <Stack w="w-[46px]" items={[["editSec", "编辑截面"], ["cutSec", "剪切截面"], ["drawShape", "绘制形状"]]} />
        </div>
      </Group>
      <Group w="w-7"><Big n="surface" label="更多" w="w-7" caret /></Group>
      <Group w="w-7"><Big n="tools" label="工具箱" w="w-7" caret /></Group>
      <div className="flex min-w-0 flex-1 border-r border-[#e3e3e3] pl-0.5">
        <Tall n="brush" label="编辑对象显示" w="w-[46px]" />
        <Tall n="assign" label="指派特征颜色" w="w-[46px]" />
        <Tall label="文本" w="w-[28px]" />
        <Stack w="w-[45px]" items={[["engrave", "刻字"], ["blank", "毛坯套裁"], ["die", "冲模工程"]]} />
        <Stack w="w-[88px]" items={[["compare", "模型比较（即将失效）"], ["compare", "比较体"], ["density", "编辑实体密度"]]} />
        <Stack w="w-[72px]" items={[["wave", "WAVE 几何链接器"], ["equals", "表达式"], ["spline", "样条（即将失效）"]]} />
      </div>
      <div className="flex w-[14px] shrink-0 items-end justify-center pb-1.5"><Caret /></div>
    </div>
  );
}

const viewTools = ["viewFind", "fit", "render", "grayCyl", "eyeList", "layGear", "winBox"];

function SelectionBar() {
  return (
    <div className="flex h-[23px] shrink-0 items-center border-y border-[#d8d8d8] bg-white text-[7px] text-[#222]">
      <button type="button" className="flex w-[60px] shrink-0 items-center gap-1 pl-2"><Icon n="menu" s="size-3" /><span>菜单(<u>M</u>)</span><Caret /></button>
      <div className="ml-[9px] flex items-center">
        <Picker label="类型过滤器" value="无选择过滤器" w="w-[93px]" />
        <IconButton n="filter" cls="w-[26px]" />
        <Picker label="选择范围" value="整个装配" w="w-[98px]" />
      </div>
      <IconButton n="selCube" cls="ml-1 h-5 w-5 bg-[#cfe8f0]" />
      <IconButton n="dimSel" cls="w-5" />
      <IconButton n="filterList" cls="w-[22px]" />
      <Caret />
      <IconButton n="dimBr" cls="ml-1 w-5" />
      <IconButton n="orBox" cls="w-[22px]" />
      <IconButton n="orRect" cls="w-[21px]" />
      <Caret />
      <IconButton n="grayCube" cls="ml-1 w-[22px]" />
      <IconButton n="sliceCube" cls="w-5" />
      <div className="ml-1 flex items-center border-l border-[#ddd] pl-[7px]">
        <Picker label="图层" value="1" w="w-[31px]" />
      </div>
      <IconButton n="layerTable" cls="ml-0.5 w-[22px]" />
      <IconButton n="grid" cls="w-[21px]" />
      <IconButton n="csys" cls="w-[21px]" />
      <span className="w-[60px] shrink-0 whitespace-nowrap pl-0.5">简化装配（原有）</span>
      {viewTools.map((n) => (
        <button key={n} type="button" aria-label={n} className="flex w-[30px] shrink-0 items-center gap-1"><Icon n={n} s="size-[17px]" /><Caret /></button>
      ))}
      <div className="flex h-full flex-1 items-end justify-end pr-1 pb-1"><Caret /></div>
    </div>
  );
}

function Viewport() {
  return (
    <main className="flex min-w-0 flex-1 flex-col bg-white">
      <div className="flex h-[15px] shrink-0 border-b-2 border-[#14678c]">
        <div className="flex items-center gap-0.5 bg-[#04628a] px-1 text-[8px] text-white">
          <Icon n="tabPart" s="size-2.5" />
          <span>83-1.prt</span>
          <Icon n="tabDoc" s="size-2" />
          <IconButton n="tabClose" s="size-2" />
        </div>
      </div>
      <div className="min-h-0 flex-1 bg-linear-[180deg,#000_4%,#191919_17%,#2c2c2c_29%,#4a4a4a_48%,#6c6c6c_64%,#808080_77%]">
        <svg viewBox="0 0 602 535" className="h-full w-full" role="img" aria-label="模型">
          <g transform="translate(126 224) scale(.33333)" strokeLinejoin="round">
            <path fillRule="evenodd" fill="#dbeeff" stroke="#22303c" strokeWidth="3" d="M75 60Q78 48 90 50L165 66 578 188V200Q535 202 505 218Q486 235 500 260L720 481 706 503 205 361Q140 373 68 377Q60 376 61 365ZM125 130Q128 112 147 115L370 181Q388 188 387 205Q386 215 375 221Q330 250 285 272Q200 310 135 317Q118 317 118 300Z" />
            <g fill="none" stroke="#3c4a52" strokeWidth="2.500">
              <path d="M163 83V70L105 64Q88 66 87 85L74 345Q76 363 105 361Q230 350 320 305Q430 240 490 212Q530 195 578 194" />
              <path d="M158 80 108 73Q97 74 96 88L84 342Q86 354 108 352Q220 345 310 298Q420 232 480 205Q530 188 578 188" />
              <path d="M155 365Q240 350 325 311Q430 250 500 221Q540 202 578 200M126 353H160V360H126ZM144 60V76M155 63V82" />
            </g>
            <path d="M432 322 434 242 442 242 443 322Z" fill="#6fae5c" />
            <path d="M330 337 432 336V345L330 341Z" fill="#ee8d8d" />
            <text x="446" y="230" fontSize="25" fill="#53a052" className="font-['Liberation_Sans',sans-serif]">YC</text>
            <circle cx="438" cy="341" r="5" fill="#3155a8" />
            <text x="329" y="329" fontSize="25" fill="#a33845" className="font-['Liberation_Sans',sans-serif]">XC</text>
            <text x="439" y="339" fontSize="25" fill="#254b96" className="font-['Liberation_Sans',sans-serif]">ZC</text>
          </g>
          <g fill="none" stroke="#b8b8b8">
            <circle cx="409.500" cy="202" r="6" strokeDasharray="3 1" />
            <path d="M401 202H418M409.500 193.500V210.500" />
          </g>
          <rect x="53.500" y="452" width="27" height="27" fill="none" stroke="#b4b4b4" />
          <path d="M65.500 452V434H64L66.500 420 70 434H68.500V452Z" fill="#1f9a2f" />
          <path d="M54 464.500H38V463L21 465.500 38 468.500V467H54Z" fill="#d0222c" />
          <path d="M13 463 17 468M17 463 13 468" stroke="#a94848" />
          <path d="M64 410 66.500 413 69 410" stroke="#5c8a5c" fill="none" />
          <path d="M597 220V226M597 238V243M559 287V291M559 365V370M125 234V240" stroke="#6a3434" />
        </svg>
      </div>
    </main>
  );
}

const tree: { icons: string[]; label: string; exp?: string; cls?: string; pad: string; mark?: boolean; film?: boolean }[] = [
  { exp: "+", icons: ["viewIco"], label: "模型视图", pad: "pl-1" },
  { exp: "+", icons: ["check", "camera"], label: "摄像机", pad: "pl-1" },
  { exp: "−", icons: ["ball", "hist"], label: "模型历史记录", pad: "pl-1", mark: true },
  { icons: ["eyeOff", "datum"], label: "基准坐标系 (0)", pad: "pl-6", cls: "text-[#a8a8a8]", mark: true },
  { icons: ["eye", "body"], label: "体 (3)", pad: "pl-6", cls: "font-bold", mark: true, film: true },
];

function Navigator() {
  const rows = Array.from({ length: 35 }, (_, i) => tree[i]);
  return (
    <aside className="flex w-[200px] shrink-0 flex-col border-l-2 border-[#dcdcdc] bg-white pr-1 pl-1 text-[8px] text-[#222]">
      <h2 className="flex h-[18px] shrink-0 items-center gap-2 pl-1"><Icon n="wnd" s="size-2.5" />部件导航器</h2>
      <div className="min-h-0 flex-1 overflow-hidden border-x border-[#e4e4e4]">
        <table className="h-full w-full table-fixed border-collapse leading-[10px]">
          <thead className="bg-[#f0f0f0] text-left">
            <tr className="h-[13px]">
              <th className="p-0 pl-1 font-normal"><span className="flex items-center gap-3">名称<span className="border-x-[3px] border-b-[3px] border-x-transparent border-b-black" /></span></th>
              <th className="w-[15px] border-l border-[#e2e2e2] p-0 text-center font-normal">当</th>
              <th className="w-[15px] border-l border-[#e2e2e2] p-0 text-center font-normal">最</th>
              <th className="w-[34px] border-l border-[#e2e2e2] p-0 pl-1 font-normal">附注</th>
            </tr>
          </thead>
          <tbody>
            {rows.map((r, i) => (
              <tr key={i} className={i > 4 && i % 2 === 1 ? "h-3 border-y border-[#f1f1f1] bg-[#f9f9f9]" : "h-3 bg-white"}>
                <td className="p-0">
                  <span className={`flex h-[10px] items-center gap-px whitespace-nowrap ${r ? r.pad : ""} ${r?.cls ?? ""}`}>
                    {r?.exp && <span className="w-2 text-[8px]">{r.exp}</span>}
                    {r?.icons.map((n) => <Icon key={n} n={n} s="size-2.5" />)}
                    {r && <span className="pl-px">{r.label}</span>}
                  </span>
                </td>
                <td className="border-l border-[#f1f1f1] p-0">{r?.film && <span className="flex justify-center"><Icon n="film" s="size-2.5" /></span>}</td>
                <td className="border-l border-[#f1f1f1] p-0">{r?.mark && <span className="flex justify-center"><Icon n="check" s="size-2.5" /></span>}</td>
                <td className="border-l border-[#f1f1f1] p-0" />
              </tr>
            ))}
          </tbody>
        </table>
      </div>
      <div className="h-3 shrink-0 border-x border-[#e4e4e4] bg-[#f2f2f2] pt-1 pr-9 pl-3"><div className="h-px bg-[#777]" /></div>
      <div className="shrink-0 border-t-2 border-[#c4c4c4] pb-[3px] text-[9px] text-[#1b6c8c]">
        {["搜索", "相关性", "细节", "预览"].map((t) => (
          <button key={t} type="button" className="flex h-[15px] w-full items-center gap-1.5 border-b border-[#bdbdbd] pl-1.5">
            <span className="border-y-2 border-l-[3px] border-y-transparent border-l-[#0e4f6b]" />
            {t}
          </button>
        ))}
      </div>
    </aside>
  );
}

function Rail() {
  return (
    <div className="flex w-[21px] shrink-0 flex-col border-r-2 border-[#d3d7da] bg-[#dedede]">
      <IconButton n="gear" s="size-2.5" cls="h-4" />
      <IconButton n="asm" cls="mt-2 h-[27px]" />
      <IconButton n="constr" cls="h-[27px]" />
      <IconButton n="partNav" cls="h-[27px] bg-white" />
      <IconButton n="reuse" cls="h-[27px]" />
      <IconButton n="hd3d" cls="h-[27px]" />
      <IconButton n="touchBall" cls="mt-1.5 h-[27px]" />
      <IconButton n="web" cls="mt-1.5 h-[27px]" />
      <IconButton n="clock" cls="mt-1.5 h-[27px]" />
      <IconButton n="rainbow" cls="h-[27px]" />
      <IconButton n="bluePart" cls="h-[27px]" />
      <IconButton n="toolBoxed" cls="h-[27px]" />
    </div>
  );
}

function BottomBar() {
  return (
    <div className="flex h-[30px] shrink-0 items-center bg-white">
      <div className="flex flex-1 items-center justify-between pl-[5px]">
        {bottomTools.map((n, i) => <IconButton key={i} n={n} />)}
      </div>
      <div className="flex w-[234px] shrink-0 items-center justify-between pr-1 pl-[3px]">
        <div className="grid w-[204px] grid-cols-13 gap-y-[3px] border-r border-[#e6e6e6]">
          {smallTop.map((n, i) => <IconButton key={i} n={n} s="size-[11px]" />)}
          {smallBottom.map((n, i) => <IconButton key={i} n={n} s="size-[11px]" />)}
          <button type="button" className="mx-auto h-[11px] w-3 border border-[#b64a6c] bg-[#d8215c] text-[7px] leading-[9px] font-bold text-white">kg</button>
          <IconButton n="darkCup" s="size-[11px]" />
        </div>
        <span className="flex items-end self-end"><Caret /></span>
      </div>
    </div>
  );
}

export default function App() {
  return (
    <div className="flex h-screen min-h-[640px] flex-col overflow-hidden border-x-2 border-b-4 border-[#046086] bg-[#046a91] font-['Noto_Sans','Noto_Sans_CJK_SC',sans-serif]">
      <TitleBar />
      <TabBar />
      <Ribbon />
      <SelectionBar />
      <div className="flex min-h-0 flex-1">
        <div className="flex w-8 shrink-0 flex-col bg-white">
          <div className="flex min-h-0 flex-1 flex-col items-center justify-between pt-1 pb-0.5">
            {leftTools.map((n) => <IconButton key={n} n={n} />)}
          </div>
          <div className="grid grid-cols-2 gap-y-1 border-b border-[#ddd] pt-1 pb-0.5">
            {["arch", "tealSheet", "drumPink", "knife"].map((n) => <IconButton key={n} n={n} s="size-[11px]" />)}
          </div>
          <div className="flex h-3 items-center pl-1"><span className="border-y-2 border-r-2 border-y-transparent border-r-black" /></div>
        </div>
        <Viewport />
        <div className="flex w-[23px] shrink-0 flex-col items-center bg-white pt-1">
          {rightTools.map((n, i) => <IconButton key={i} n={n} cls="h-5" />)}
          <span className="mt-1 w-4 border-t border-[#ddd]" />
          <div className="mt-auto flex h-3 w-full items-center pl-1"><span className="border-y-2 border-r-2 border-y-transparent border-r-black" /></div>
        </div>
        <Navigator />
        <Rail />
      </div>
      <BottomBar />
      <footer className="flex h-[15px] shrink-0 items-center border-t-2 border-[#dcdcdc] bg-white pl-0.5 text-[7px] font-medium text-black">
        选择对象并使用 MB3，或者双击某一对象
      </footer>
    </div>
  );
}
